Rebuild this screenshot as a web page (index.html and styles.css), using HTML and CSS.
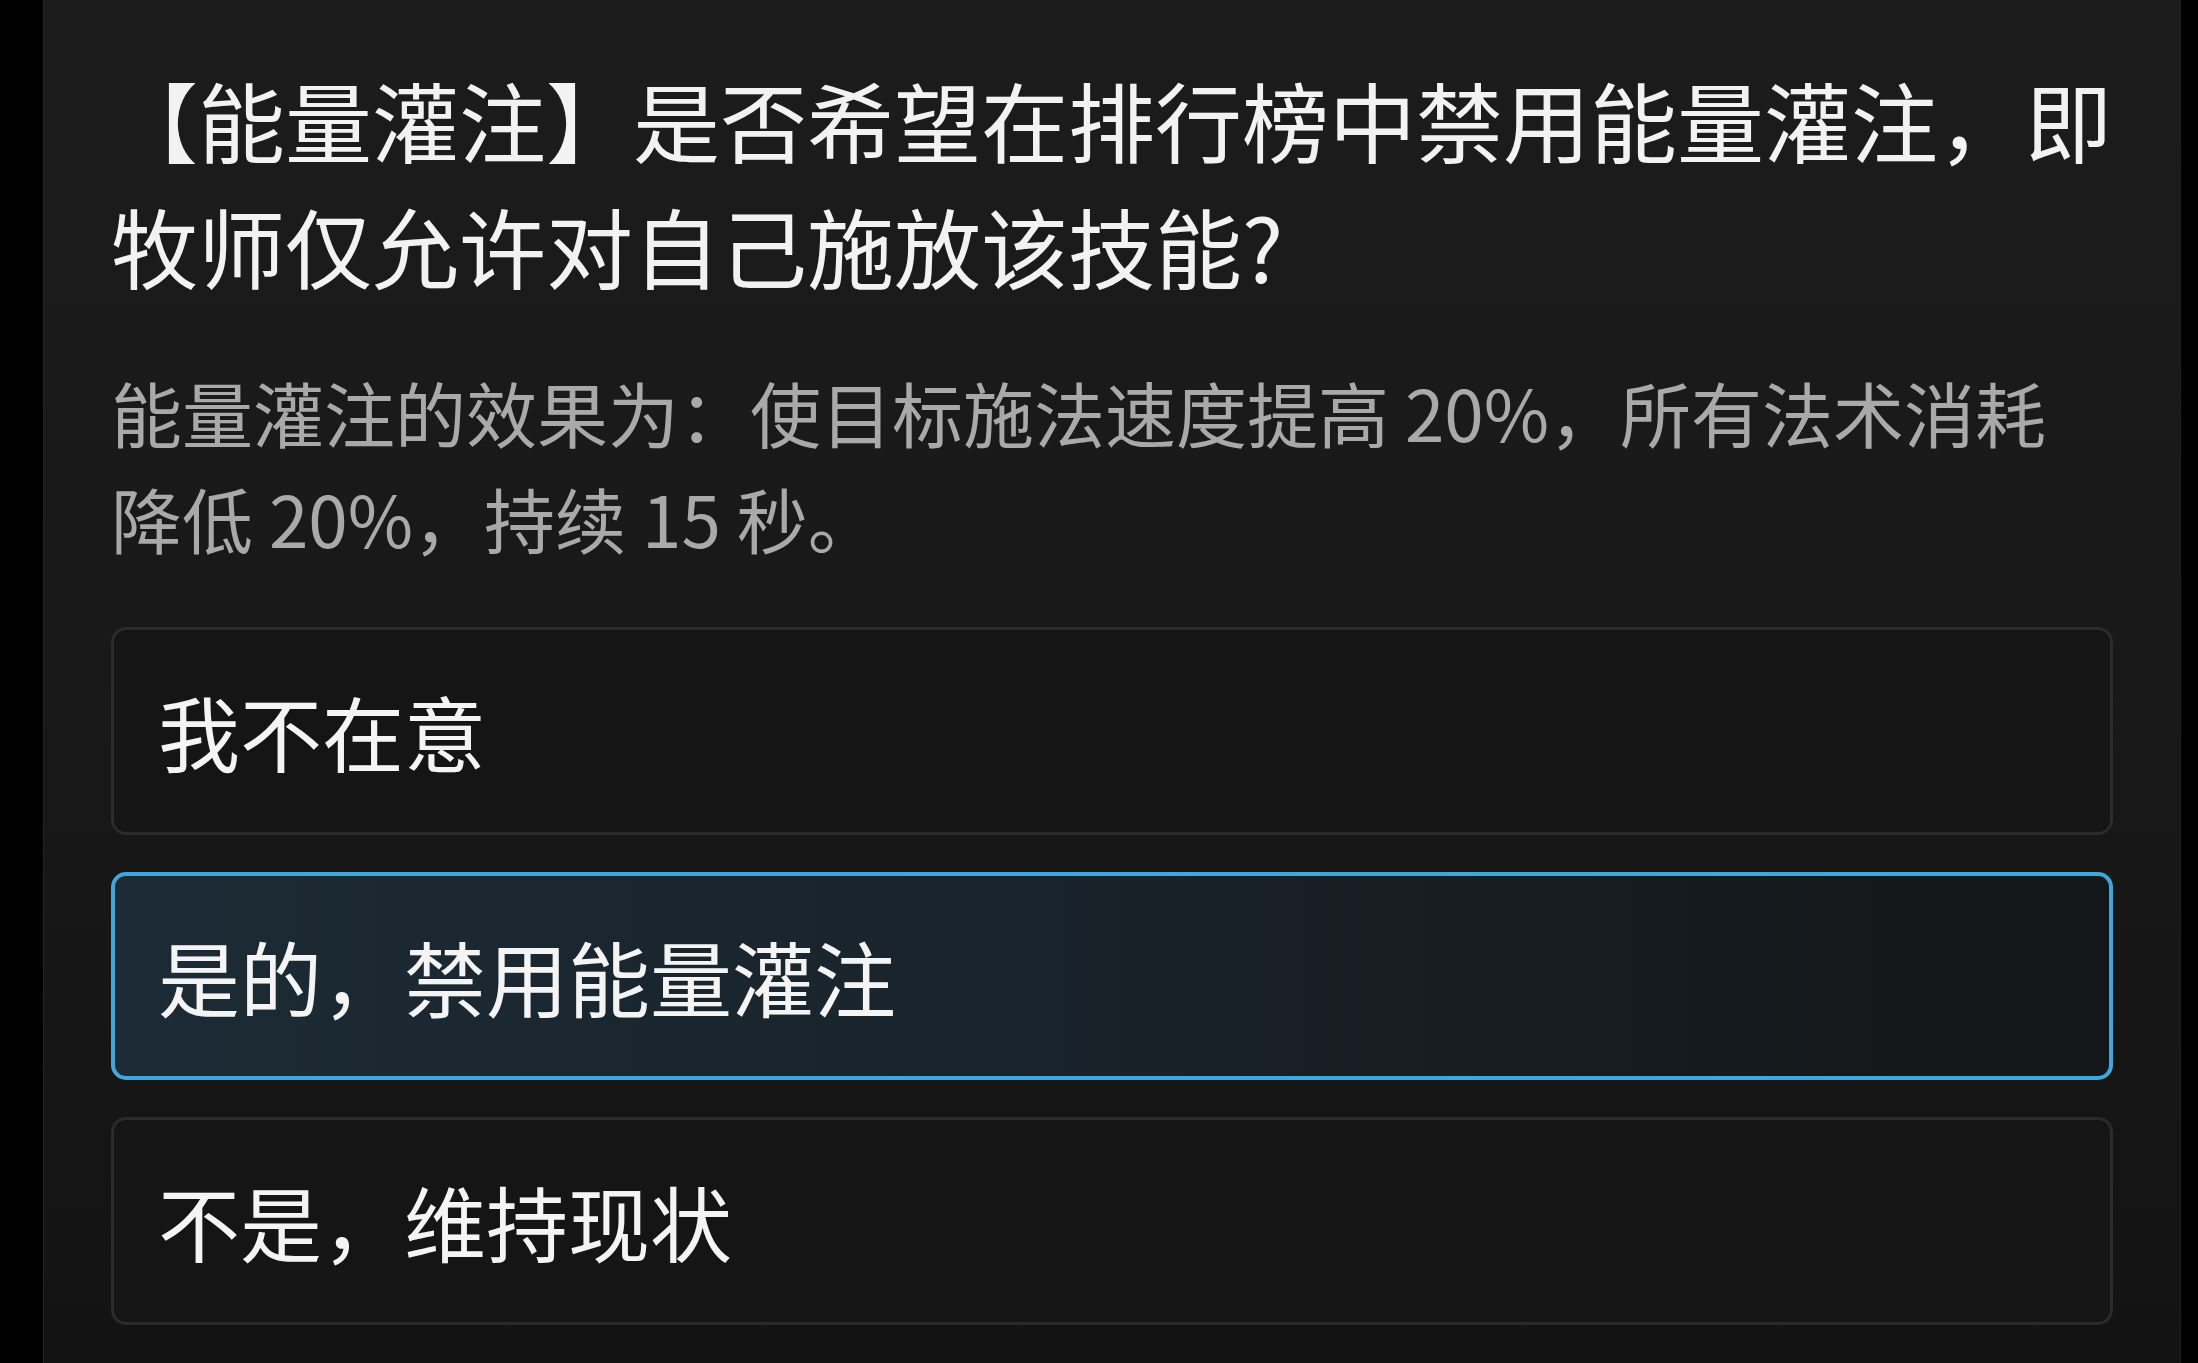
FILE: index.html
```html
<!DOCTYPE html>
<html lang="zh-CN">
  <head>
    <meta charset="UTF-8" />
    <meta name="viewport" content="width=device-width, initial-scale=1.0" />
    <title>能量灌注投票</title>
    <link rel="stylesheet" href="styles.css">
  </head>
  <body>
    <!-- Poll card -->
    <div class="poll-card">
      <h2 class="poll-title">【能量灌注】是否希望在排行榜中禁用能量灌注，即牧师仅允许对自己施放该技能?</h2>
      <p class="poll-desc">能量灌注的效果为：使目标施法速度提高 20%，所有法术消耗降低 20%，持续 15 秒。</p>

      <!-- Answer options -->
      <div class="poll-options">
        <div class="poll-option">我不在意</div>
        <div class="poll-option is-selected">是的，禁用能量灌注</div>
        <div class="poll-option">不是，维持现状</div>
      </div>
    </div>
  </body>
</html>
```

FILE: styles.css
```css
/* Page */
body,
html {
  margin: 0;
  padding: 0;
  height: 100%;
  background-color: black;
  overflow: hidden;
  font-family: 'Noto Sans CJK SC', 'Microsoft YaHei', sans-serif;
}

/* Card holding the question */
.poll-card {
  margin: 0 17px 0 43px;
  padding: 56px 67px 60px 67px;
  background: linear-gradient(180deg, #1c1c1c 0%, #181818 55%, #131313 100%);
  border-left: 1px solid #242424;
  border-right: 1px solid #1f1f1f;
  border-radius: 0 0 14px 14px;
}

.poll-title {
  margin: 0;
  color: #f2f2f2;
  font-size: 87px;
  font-weight: 400;
  line-height: 126px;
}

.poll-desc {
  margin: 50px 0 0 0;
  max-width: 1960px; /* keeps the line break after 消耗 */
  color: #a9a9a9;
  font-size: 71px;
  font-weight: 400;
  line-height: 106px;
}

/* Options list */
.poll-options {
  display: flex;
  flex-direction: column;
  gap: 37px;
  margin-top: 57px;
}

.poll-option {
  padding: 40px 44px;
  background-color: #151515;
  border: 3px solid #2b2b2b;
  border-radius: 15px;
  color: #f4f4f4;
  font-size: 82px;
  font-weight: 400;
  line-height: 122px;
  cursor: pointer;
}

.poll-option.is-selected {
  background: linear-gradient(90deg, #1c2b35 0%, #19232b 45%, #14181b 90%);
  border: 4px solid #3ea8dc;
  padding: 39px 43px;
}
```
